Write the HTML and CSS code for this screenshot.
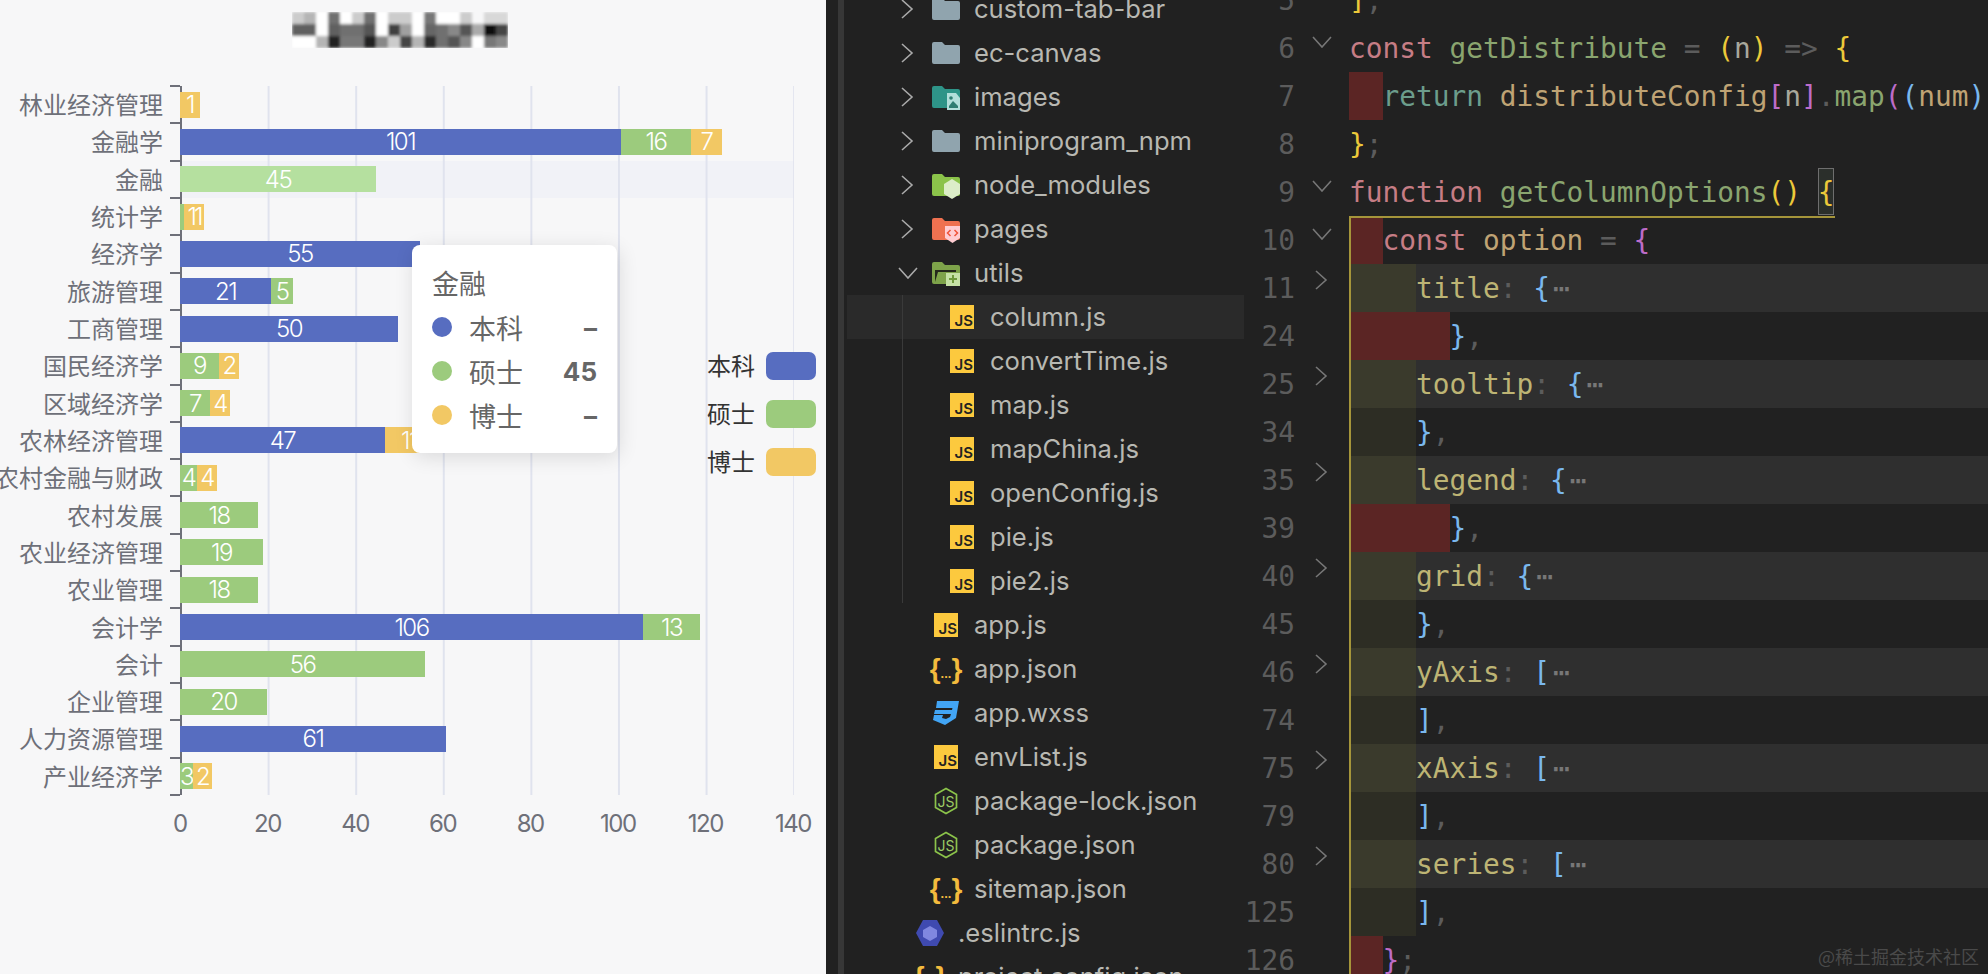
FILE: index.html
```html
<!DOCTYPE html>
<html lang="zh">
<head>
    <meta charset="UTF-8">
    <meta name="viewport" content="width=device-width, initial-scale=1.0">
    <title>column.js</title>
    <link rel="stylesheet" href="styles.css">
</head>
<body>
    <!-- shared icons -->
    <svg class="defs" aria-hidden="true">
        <symbol id="folder" viewBox="0 0 28 24"><path d="M2 1h8l3 3h13a2 2 0 0 1 2 2v15a2 2 0 0 1-2 2H2a2 2 0 0 1-2-2V3a2 2 0 0 1 2-2z"/></symbol>
        <symbol id="chev-r" viewBox="0 0 16 20"><path d="M2 1l10 9-10 9" fill="none" stroke="currentColor" stroke-width="1.6"/></symbol>
        <symbol id="chev-d" viewBox="0 0 20 12"><path d="M1 1l9 10 9-10" fill="none" stroke="currentColor" stroke-width="1.6"/></symbol>
        <symbol id="node" viewBox="0 0 24 28"><path d="M12 1.500l10.500 6v13l-10.500 6-10.500-6v-13z" fill="none" stroke="#8bc34a" stroke-width="1.700"/><text x="12" y="19.500" text-anchor="middle" font-size="14" fill="#9ccc65" font-family="Inter, sans-serif">JS</text></symbol>
    </svg>

    <section class="chart-panel">
        <svg class="mosaic" width="216" height="36" viewBox="0 0 216 36">
            <defs><filter id="soft"><feGaussianBlur stdDeviation="1.4"/></filter></defs>
            <g filter="url(#soft)">
                <rect x="0" y="0" width="12" height="12" fill="#ccc"/><rect x="12" y="0" width="12" height="12" fill="#b5b5b5"/><rect x="24" y="0" width="12" height="12" fill="#fff"/><rect x="36" y="0" width="12" height="12" fill="#707070"/><rect x="48" y="0" width="12" height="12" fill="#fff"/><rect x="60" y="0" width="12" height="12" fill="#ccc"/><rect x="72" y="0" width="12" height="12" fill="#707070"/><rect x="84" y="0" width="12" height="12" fill="#fff"/><rect x="96" y="0" width="24" height="12" fill="#ccc"/><rect x="120" y="0" width="12" height="12" fill="#fff"/><rect x="132" y="0" width="12" height="12" fill="#777"/><rect x="144" y="0" width="24" height="12" fill="#fff"/><rect x="168" y="0" width="12" height="12" fill="#ccc"/><rect x="192" y="0" width="24" height="12" fill="#d8d8d8"/>
                <rect x="0" y="12" width="24" height="12" fill="#606060"/><rect x="24" y="12" width="12" height="12" fill="#fff"/><rect x="36" y="12" width="12" height="12" fill="#606060"/><rect x="48" y="12" width="24" height="12" fill="#707070"/><rect x="72" y="12" width="12" height="12" fill="#555"/><rect x="84" y="12" width="12" height="12" fill="#fff"/><rect x="96" y="12" width="12" height="12" fill="#404040"/><rect x="108" y="12" width="12" height="12" fill="#a0a0a0"/><rect x="120" y="12" width="12" height="12" fill="#fff"/><rect x="132" y="12" width="12" height="12" fill="#666"/><rect x="144" y="12" width="12" height="12" fill="#707070"/><rect x="156" y="12" width="12" height="12" fill="#888"/><rect x="168" y="12" width="12" height="12" fill="#555"/><rect x="180" y="12" width="12" height="12" fill="#aaa"/><rect x="192" y="12" width="12" height="12" fill="#111"/><rect x="204" y="12" width="12" height="12" fill="#444"/>
                <rect x="0" y="24" width="24" height="12" fill="#fff"/><rect x="24" y="24" width="12" height="12" fill="#b5b5b5"/><rect x="36" y="24" width="12" height="12" fill="#222"/><rect x="48" y="24" width="24" height="12" fill="#777"/><rect x="72" y="24" width="12" height="12" fill="#222"/><rect x="84" y="24" width="12" height="12" fill="#888"/><rect x="96" y="24" width="12" height="12" fill="#ccc"/><rect x="108" y="24" width="12" height="12" fill="#444"/><rect x="120" y="24" width="12" height="12" fill="#b5b5b5"/><rect x="132" y="24" width="12" height="12" fill="#2a2a2a"/><rect x="144" y="24" width="12" height="12" fill="#707070"/><rect x="156" y="24" width="12" height="12" fill="#555"/><rect x="168" y="24" width="12" height="12" fill="#888"/><rect x="180" y="24" width="12" height="12" fill="#fff"/><rect x="192" y="24" width="12" height="12" fill="#777"/><rect x="204" y="24" width="12" height="12" fill="#888"/>
            </g>
        </svg>

        <div class="chart">
            <div class="cat"><span class="name">林业经济管理</span><div class="bars"><span class="seg yellow" style="width:20px">1</span></div></div>
            <div class="cat"><span class="name">金融学</span><div class="bars"><span class="seg blue" style="width:441px">101</span><span class="seg green" style="width:70px">16</span><span class="seg yellow" style="width:31px">7</span></div></div>
            <div class="cat hover"><span class="name">金融</span><div class="bars"><span class="seg light-green" style="width:196px">45</span></div></div>
            <div class="cat"><span class="name">统计学</span><div class="bars"><span class="seg green" style="width:4px"></span><span class="seg yellow tight" style="width:20px">11</span></div></div>
            <div class="cat"><span class="name">经济学</span><div class="bars"><span class="seg blue" style="width:240px">55</span></div></div>
            <div class="cat"><span class="name">旅游管理</span><div class="bars"><span class="seg blue" style="width:91px">21</span><span class="seg green" style="width:22px">5</span></div></div>
            <div class="cat"><span class="name">工商管理</span><div class="bars"><span class="seg blue" style="width:218px">50</span></div></div>
            <div class="cat"><span class="name">国民经济学</span><div class="bars"><span class="seg green" style="width:39px">9</span><span class="seg yellow" style="width:20px">2</span></div></div>
            <div class="cat"><span class="name">区域经济学</span><div class="bars"><span class="seg green" style="width:30px">7</span><span class="seg yellow" style="width:20px">4</span></div></div>
            <div class="cat"><span class="name">农林经济管理</span><div class="bars"><span class="seg blue" style="width:205px">47</span><span class="seg yellow" style="width:48px">11</span></div></div>
            <div class="cat"><span class="name">农村金融与财政</span><div class="bars"><span class="seg green" style="width:17px">4</span><span class="seg yellow" style="width:20px">4</span></div></div>
            <div class="cat"><span class="name">农村发展</span><div class="bars"><span class="seg green" style="width:78px">18</span></div></div>
            <div class="cat"><span class="name">农业经济管理</span><div class="bars"><span class="seg green" style="width:83px">19</span></div></div>
            <div class="cat"><span class="name">农业管理</span><div class="bars"><span class="seg green" style="width:78px">18</span></div></div>
            <div class="cat"><span class="name">会计学</span><div class="bars"><span class="seg blue" style="width:463px">106</span><span class="seg green" style="width:57px">13</span></div></div>
            <div class="cat"><span class="name">会计</span><div class="bars"><span class="seg green" style="width:245px">56</span></div></div>
            <div class="cat"><span class="name">企业管理</span><div class="bars"><span class="seg green" style="width:87px">20</span></div></div>
            <div class="cat"><span class="name">人力资源管理</span><div class="bars"><span class="seg blue" style="width:266px">61</span></div></div>
            <div class="cat last"><span class="name">产业经济学</span><div class="bars"><span class="seg green" style="width:13px">3</span><span class="seg yellow" style="width:19px">2</span></div></div>
        </div>

        <div class="x-axis">
            <span>0</span><span>20</span><span>40</span><span>60</span><span>80</span><span>100</span><span>120</span><span>140</span>
        </div>

        <div class="legend">
            <div class="legend-item"><span>本科</span><i class="swatch blue"></i></div>
            <div class="legend-item"><span>硕士</span><i class="swatch green"></i></div>
            <div class="legend-item"><span>博士</span><i class="swatch yellow"></i></div>
        </div>

        <div class="tooltip">
            <div class="tip-title">金融</div>
            <div class="tip-row"><i class="dot blue"></i><span>本科</span><b>–</b></div>
            <div class="tip-row"><i class="dot green"></i><span>硕士</span><b>45</b></div>
            <div class="tip-row"><i class="dot yellow"></i><span>博士</span><b>–</b></div>
        </div>
    </section>

    <aside class="sidebar">
        <div class="tree">
            <div class="node lv1"><span class="twist"><svg width="16" height="20"><use href="#chev-r"/></svg></span><span class="icon"><svg width="28" height="24" fill="#90a4ae"><use href="#folder"/></svg></span>custom-tab-bar</div>
            <div class="node lv1"><span class="twist"><svg width="16" height="20"><use href="#chev-r"/></svg></span><span class="icon"><svg width="28" height="24" fill="#90a4ae"><use href="#folder"/></svg></span>ec-canvas</div>
            <div class="node lv1"><span class="twist"><svg width="16" height="20"><use href="#chev-r"/></svg></span><span class="icon"><svg width="28" height="24" viewBox="0 0 28 24" fill="#2e9488"><use href="#folder"/><path d="M15 8h9l4 5v12H15z" fill="#b2dfdb"/><path d="M17 21l4-5 3 3 2 2v2h-9z" fill="#2e7d72"/><circle cx="19" cy="13" r="1.800" fill="#2e7d72"/></svg></span>images</div>
            <div class="node lv1"><span class="twist"><svg width="16" height="20"><use href="#chev-r"/></svg></span><span class="icon"><svg width="28" height="24" fill="#90a4ae"><use href="#folder"/></svg></span>miniprogram_npm</div>
            <div class="node lv1"><span class="twist"><svg width="16" height="20"><use href="#chev-r"/></svg></span><span class="icon"><svg width="28" height="24" viewBox="0 0 28 24" fill="#8bc34a"><use href="#folder"/><path d="M20 6l8 5v10l-8 5-8-5V11z" fill="#dcedc8"/></svg></span>node_modules</div>
            <div class="node lv1"><span class="twist"><svg width="16" height="20"><use href="#chev-r"/></svg></span><span class="icon"><svg width="28" height="24" viewBox="0 0 28 24" fill="#ef7150"><use href="#folder"/><path d="M13 9h15v12l-7.500 5-7.500-5z" fill="#ffcdd2"/><path d="M18.500 13l-3 3 3 3M22.500 13l3 3-3 3" fill="none" stroke="#f0533a" stroke-width="1.500"/></svg></span>pages</div>
            <div class="node lv1"><span class="twist opened"><svg width="20" height="12"><use href="#chev-d"/></svg></span><span class="icon"><svg width="28" height="24" viewBox="0 0 28 24" fill="#7ea34a"><use href="#folder"/><path d="M3 21V9h21v2H6z" fill="#24281c"/><path d="M14 12h14v13H14z" fill="#c5e1a5"/><path d="M21 14v8M17 18h8" stroke="#6f9a3c" stroke-width="2"/></svg></span>utils</div>
            <div class="children">
                <div class="node lv2 active"><span class="twist"></span><span class="icon"><span class="js">JS</span></span>column.js</div>
                <div class="node lv2"><span class="twist"></span><span class="icon"><span class="js">JS</span></span>convertTime.js</div>
                <div class="node lv2"><span class="twist"></span><span class="icon"><span class="js">JS</span></span>map.js</div>
                <div class="node lv2"><span class="twist"></span><span class="icon"><span class="js">JS</span></span>mapChina.js</div>
                <div class="node lv2"><span class="twist"></span><span class="icon"><span class="js">JS</span></span>openConfig.js</div>
                <div class="node lv2"><span class="twist"></span><span class="icon"><span class="js">JS</span></span>pie.js</div>
                <div class="node lv2"><span class="twist"></span><span class="icon"><span class="js">JS</span></span>pie2.js</div>
            </div>
            <div class="node lv1"><span class="twist"></span><span class="icon"><span class="js">JS</span></span>app.js</div>
            <div class="node lv1"><span class="twist"></span><span class="icon"><span class="braces">{<small>...</small>}</span></span>app.json</div>
            <div class="node lv1"><span class="twist"></span><span class="icon"><svg width="28" height="24" viewBox="0 0 28 24"><path d="M5 0h22l-3 17-11 7-12-5 1-5h9l-1 3 4 1 4-2 1-3H2l1-4h17l.5-2H4z" fill="#42a5f5"/></svg></span>app.wxss</div>
            <div class="node lv1"><span class="twist"></span><span class="icon"><span class="js">JS</span></span>envList.js</div>
            <div class="node lv1"><span class="twist"></span><span class="icon"><svg width="24" height="28"><use href="#node"/></svg></span>package-lock.json</div>
            <div class="node lv1"><span class="twist"></span><span class="icon"><svg width="24" height="28"><use href="#node"/></svg></span>package.json</div>
            <div class="node lv1"><span class="twist"></span><span class="icon"><span class="braces">{<small>...</small>}</span></span>sitemap.json</div>
            <div class="node lv0"><span class="twist"></span><span class="icon"><svg width="28" height="26" viewBox="0 0 28 26"><path d="M7 0h14l7 13-7 13H7L0 13z" fill="#3f4ab0"/><path d="M14 6l7 4v7l-7 4-7-4v-7z" fill="#8088e0"/></svg></span>.eslintrc.js</div>
            <div class="node lv0"><span class="twist"></span><span class="icon"><span class="braces">{<small>...</small>}</span></span>project.config.json</div>
        </div>
    </aside>

    <main class="editor">
        <div class="line"><span class="ln">5</span><span class="fold"></span><div class="code"><span class="yl">]</span><span class="gy">,</span></div></div>
        <div class="line"><span class="ln">6</span><span class="fold open"><svg width="20" height="12"><use href="#chev-d"/></svg></span><div class="code"><span class="kw">const</span> <span class="fn">getDistribute</span> <span class="gy">=</span> <span class="yl">(</span><span class="id">n</span><span class="yl">)</span> <span class="gy">=&gt;</span> <span class="yl">{</span></div></div>
        <div class="line"><span class="ln">7</span><span class="fold"></span><div class="code"><span class="ind red w2"></span><span class="rt">return</span> <span class="tn">distributeConfig</span><span class="pu">[</span><span class="id">n</span><span class="pu">]</span><span class="gy">.</span><span class="fn">map</span><span class="pu">(</span><span class="bl">(</span><span class="tn">num</span><span class="bl">)</span></div></div>
        <div class="line"><span class="ln">8</span><span class="fold"></span><div class="code"><span class="yl">}</span><span class="gy">;</span></div></div>
        <div class="line"><span class="ln">9</span><span class="fold open"><svg width="20" height="12"><use href="#chev-d"/></svg></span><div class="code"><span class="kw">function</span> <span class="fn">getColumnOptions</span><span class="yl">()</span> <span class="yl match">{</span></div></div>
        <div class="line"><span class="ln">10</span><span class="fold open"><svg width="20" height="12"><use href="#chev-d"/></svg></span><div class="code scope-top"><span class="ind red w2"></span><span class="kw">const</span> <span class="tn">option</span> <span class="gy">=</span> <span class="pu">{</span></div></div>
        <div class="line"><span class="ln">11</span><span class="fold"><svg width="16" height="20"><use href="#chev-r"/></svg></span><div class="code folded"><span class="ind olive w4"></span><span class="pr">title</span><span class="gy">:</span> <span class="bl">{</span><span class="more">⋯</span></div></div>
        <div class="line"><span class="ln">24</span><span class="fold"></span><div class="code"><span class="ind red w6"></span><span class="bl">}</span><span class="gy">,</span></div></div>
        <div class="line"><span class="ln">25</span><span class="fold"><svg width="16" height="20"><use href="#chev-r"/></svg></span><div class="code folded"><span class="ind olive w4"></span><span class="pr">tooltip</span><span class="gy">:</span> <span class="bl">{</span><span class="more">⋯</span></div></div>
        <div class="line"><span class="ln">34</span><span class="fold"></span><div class="code"><span class="ind dim w4"></span><span class="bl">}</span><span class="gy">,</span></div></div>
        <div class="line"><span class="ln">35</span><span class="fold"><svg width="16" height="20"><use href="#chev-r"/></svg></span><div class="code folded"><span class="ind olive w4"></span><span class="pr">legend</span><span class="gy">:</span> <span class="bl">{</span><span class="more">⋯</span></div></div>
        <div class="line"><span class="ln">39</span><span class="fold"></span><div class="code"><span class="ind red w6"></span><span class="bl">}</span><span class="gy">,</span></div></div>
        <div class="line"><span class="ln">40</span><span class="fold"><svg width="16" height="20"><use href="#chev-r"/></svg></span><div class="code folded"><span class="ind olive w4"></span><span class="pr">grid</span><span class="gy">:</span> <span class="bl">{</span><span class="more">⋯</span></div></div>
        <div class="line"><span class="ln">45</span><span class="fold"></span><div class="code"><span class="ind dim w4"></span><span class="bl">}</span><span class="gy">,</span></div></div>
        <div class="line"><span class="ln">46</span><span class="fold"><svg width="16" height="20"><use href="#chev-r"/></svg></span><div class="code folded"><span class="ind olive w4"></span><span class="pr">yAxis</span><span class="gy">:</span> <span class="bl">[</span><span class="more">⋯</span></div></div>
        <div class="line"><span class="ln">74</span><span class="fold"></span><div class="code"><span class="ind dim w4"></span><span class="bl">]</span><span class="gy">,</span></div></div>
        <div class="line"><span class="ln">75</span><span class="fold"><svg width="16" height="20"><use href="#chev-r"/></svg></span><div class="code folded"><span class="ind olive w4"></span><span class="pr">xAxis</span><span class="gy">:</span> <span class="bl">[</span><span class="more">⋯</span></div></div>
        <div class="line"><span class="ln">79</span><span class="fold"></span><div class="code"><span class="ind dim w4"></span><span class="bl">]</span><span class="gy">,</span></div></div>
        <div class="line"><span class="ln">80</span><span class="fold"><svg width="16" height="20"><use href="#chev-r"/></svg></span><div class="code folded"><span class="ind olive w4"></span><span class="pr">series</span><span class="gy">:</span> <span class="bl">[</span><span class="more">⋯</span></div></div>
        <div class="line"><span class="ln">125</span><span class="fold"></span><div class="code"><span class="ind dim w4"></span><span class="bl">]</span><span class="gy">,</span></div></div>
        <div class="line"><span class="ln">126</span><span class="fold"></span><div class="code"><span class="ind red w2"></span><span class="pu">}</span><span class="gy">;</span></div></div>
        <div class="watermark">@稀土掘金技术社区</div>
    </main>
</body>
</html>
```

FILE: styles.css
```css
* {
    box-sizing: border-box;
}
html, body {
    margin: 0;
    height: 974px;
    overflow: hidden;
}
body {
    display: flex;
    background: #212121;
    font-family: "Noto Sans CJK SC", sans-serif;
}
.defs {
    position: absolute;
    width: 0;
    height: 0;
}

/* chart */
.chart-panel {
    position: relative;
    flex: none;
    width: 826px;
    height: 974px;
    overflow: hidden;
    background: #f7f7f8;
}
.mosaic {
    display: block;
    margin: 12px 0 0 292px;
}
.chart {
    display: grid;
    grid-template-rows: repeat(19, 37.32px);
    width: 794px;
    margin-top: 38px;
}
.cat {
    position: relative;
    display: flex;
    align-items: center;
    min-width: 0;
}
.name {
    display: flex;
    justify-content: flex-end;
    flex: none;
    width: 180px;
    padding: 0 17px 2px 0;
    white-space: nowrap;
    font-size: 24px;
    color: #6e7079;
}
.bars {
    position: relative;
    display: flex;
    align-items: center;
    flex: 1;
    height: 100%;
    background-image: linear-gradient(to right, #e0e3ee 2px, transparent 2px);
    background-size: 87.6px 100%;
}
/* axis line and the tick at the top of each category */
.bars::before {
    content: "";
    position: absolute;
    left: 0;
    top: 0;
    bottom: 0;
    width: 2px;
    background: #6e7079;
}
.bars::after {
    content: "";
    position: absolute;
    left: -10px;
    top: -1px;
    width: 10px;
    height: 2px;
    background: #6e7079;
}
.cat.last::after {
    content: "";
    position: absolute;
    left: 170px;
    bottom: -1px;
    width: 10px;
    height: 2px;
    background: #6e7079;
}
.cat.hover .bars {
    background-color: #f1f2f7;
}
.seg {
    position: relative;
    display: flex;
    justify-content: center;
    align-items: center;
    height: 26px;
    white-space: nowrap;
    font-family: Inter, sans-serif;
    font-size: 24px;
    font-weight: 300;
    letter-spacing: -1.5px;
    color: #fff;
}
.seg.tight {
    letter-spacing: -3px;
}
.blue {
    background: #576dc0;
}
.green {
    background: #9ccb7d;
}
.light-green {
    background: #b5e09f;
}
.yellow {
    background: #f2c864;
}
.x-axis {
    display: flex;
    margin: 14px 0 0 136px;
}
.x-axis span {
    flex: 0 0 87.6px;
    text-align: center;
    font-family: Inter, sans-serif;
    font-size: 24px;
    letter-spacing: -1.5px;
    color: #6e7079;
}
.legend {
    position: absolute;
    top: 352px;
    right: 10px;
    display: flex;
    flex-direction: column;
    gap: 20px;
}
.legend-item {
    display: flex;
    align-items: center;
    gap: 11px;
    height: 28px;
    padding-bottom: 0;
    font-size: 24px;
    color: #333;
}
.legend-item span {
    margin-top: -3px;
}
.swatch {
    width: 50px;
    height: 28px;
    border-radius: 7px;
}
.tooltip {
    position: absolute;
    left: 412px;
    top: 245px;
    width: 205px;
    height: 208px;
    padding: 16px 20px;
    background: #fff;
    border-radius: 8px;
    box-shadow: 2px 4px 20px rgba(0,0,0,0.12);
    font-size: 27px;
    color: #666;
}
.tip-title {
    height: 44px;
    line-height: 44px;
}
.tip-row {
    display: flex;
    align-items: center;
    height: 44px;
}
.dot {
    width: 20px;
    height: 20px;
    border-radius: 50%;
    margin-right: 17px;
}
.tip-row b {
    margin-left: auto;
    font-family: Inter, sans-serif;
    font-size: 26px;
    font-weight: 700;
}

/* file tree */
.sidebar {
    flex: none;
    width: 418px;
    height: 974px;
    overflow: hidden;
    padding-left: 12px;
}
.tree {
    height: 1000px;
    margin-top: -13px;
    padding-left: 3px;
    border-left: 6px solid #373737;
    font-family: Inter, sans-serif;
    font-size: 25.6px;
    color: #b8b8b2;
}
.node {
    display: flex;
    align-items: center;
    height: 44px;
    padding-bottom: 1px;
    white-space: nowrap;
}
.lv0 {
    padding-left: 37px;
}
.lv1 {
    padding-left: 53px;
}
.lv2 {
    padding-left: 69px;
}
.twist {
    display: flex;
    flex: 0 0 32px;
    color: #aaa;
}
.twist.opened {
    margin-left: -2px;
    flex-basis: 34px;
}
.icon {
    display: flex;
    justify-content: center;
    align-items: center;
    flex: 0 0 28px;
    margin-right: 14px;
}
.icon svg {
    overflow: visible;
}
.js {
    display: flex;
    justify-content: flex-end;
    align-items: flex-end;
    flex: none;
    width: 24px;
    height: 24px;
    padding-right: 1px;
    background: #fcc93e;
    font-size: 15px;
    font-weight: 600;
    line-height: 17px;
    color: #222;
}
.braces {
    flex: none;
    margin: 0 -3px;
    font-family: "Liberation Sans", sans-serif;
    font-size: 28px;
    font-weight: 700;
    white-space: nowrap;
    color: #f3bb3d;
}
.braces small {
    font-size: 13px;
}
.children {
    position: relative;
}
.children::before {
    content: "";
    position: absolute;
    left: 55px;
    top: 0;
    bottom: 0;
    width: 1px;
    background: #3a3a3a;
}
.active {
    background: #2a2a2a;
}

/* editor */
.editor {
    position: relative;
    flex: 1;
    min-width: 0;
    height: 998px;
    margin-top: -24px;
    overflow: hidden;
    font-family: "DejaVu Sans Mono", monospace;
    font-size: 27.8px;
}
.line {
    display: flex;
    height: 48px;
    line-height: 50px;
}
.ln {
    flex: none;
    width: 51px;
    text-align: right;
    color: #5c5c5c;
}
.fold {
    display: flex;
    justify-content: center;
    flex: none;
    width: 54px;
    padding-top: 6px;
    color: #777;
}
.fold.open {
    padding-top: 12px;
}
.code {
    position: relative;
    flex: 1;
    min-width: 0;
    white-space: pre;
    overflow: hidden;
    color: #888;
}
.scope-top::before {
    content: "";
    position: absolute;
    left: 0;
    top: 0;
    width: 486px;
    height: 2px;
    background: #a5953a;
}
.folded {
    background: #2f2f2f;
}
.ind {
    display: inline-block;
    vertical-align: top;
    height: 48px;
    box-shadow: inset 2px 0 #a5953a;
}
.line:nth-child(3) .ind {
    box-shadow: none;
}
.w2 {
    width: 33.5px;
}
.w4 {
    width: 67px;
}
.w6 {
    width: 100.5px;
}
.red {
    background: #5b2524;
}
.olive {
    background: #3a3a2c;
}
.dim {
    background: #2d2d24;
}
.kw { color: #c67d85; }
.fn { color: #8aa56f; }
.gy { color: #5c5c5c; }
.yl { color: #ecc93a; }
.id { color: #a8a89c; }
.rt { color: #6c9d8c; }
.tn { color: #bfa374; }
.pu { color: #bd6cc8; }
.bl { color: #7ab8ee; }
.pr { color: #bdb474; }
.more {
    margin-left: 3px;
    color: #777;
}
.match {
    display: inline-block;
    vertical-align: top;
    height: 47px;
    outline: 1px solid #6e6e6e;
    outline-offset: -1px;
    background: #2b2f2b;
}
.watermark {
    position: absolute;
    right: 9px;
    bottom: 5px;
    font-family: "Noto Sans CJK SC", sans-serif;
    font-size: 18px;
    color: #4a4a4a;
}
```
